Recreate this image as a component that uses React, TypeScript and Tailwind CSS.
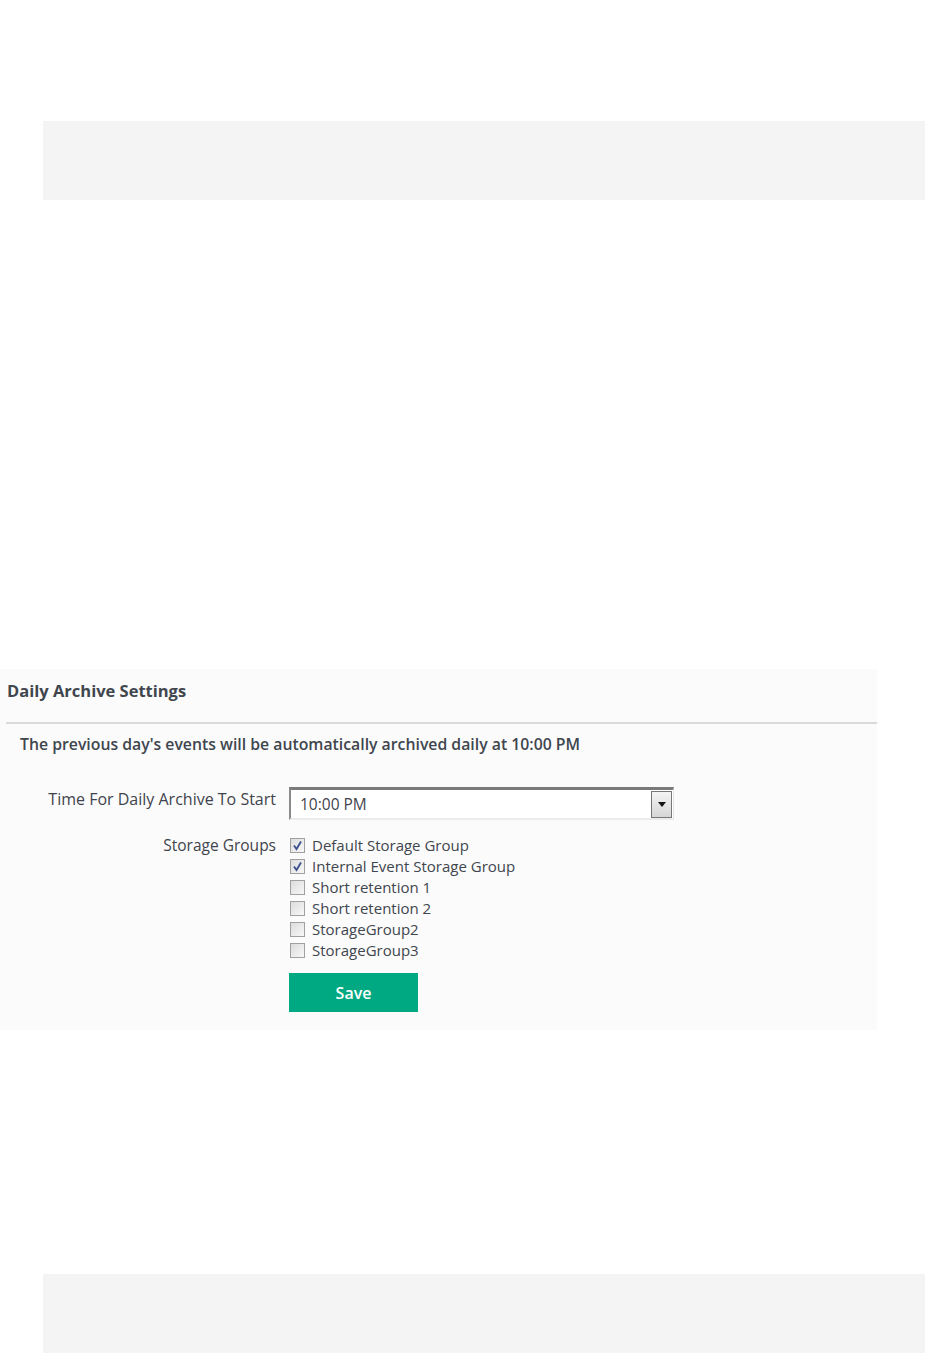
const groups = [
  { name: "Default Storage Group", checked: true },
  { name: "Internal Event Storage Group", checked: true },
  { name: "Short retention 1", checked: false },
  { name: "Short retention 2", checked: false },
  { name: "StorageGroup2", checked: false },
  { name: "StorageGroup3", checked: false },
];

function Box({ checked }: { checked: boolean }) {
  return (
    <span className="flex h-[15px] w-[15px] shrink-0 items-center justify-center border border-[#a0a0a0] bg-gradient-to-br from-[#dcdcdc] to-[#f8f8f8]">
      {checked && (
        <svg width="11" height="11" viewBox="0 0 11 11">
          <path d="M2 5.5 L4.5 9 L9 1.5" fill="none" stroke="#3c4f8c" strokeWidth="1.8" />
        </svg>
      )}
    </span>
  );
}

export default function App() {
  return (
    <div className="min-h-[1353px] bg-white font-['Open_Sans',sans-serif] text-[#3f444c]">
      <div className="pt-[121px] pl-[43px]">
        <div className="h-[79px] bg-[#f4f4f4]" />
      </div>

      <div className="mt-[469px] w-[877px] bg-[#fbfbfb] pb-[18px]">
        <div className="flex h-[53px] items-center pl-[7px] pb-[9px]">
          <h2 className="text-[16.5px] font-bold text-[#40464e]">Daily Archive Settings</h2>
        </div>
        <div className="ml-[6px] h-[2px] bg-[#d9d9d9]" />

        <p className="mt-[9px] pl-[20px] text-[15.8px] font-semibold leading-[22px] text-[#40464e]">
          The previous day's events will be automatically archived daily at 10:00 PM
        </p>

        <div className="mt-[32px] flex items-start">
          <div className="w-[276px] pt-[1px] text-right text-[16px] leading-[22px]">Time For Daily Archive To Start</div>
          <div className="ml-[13px] flex h-[33px] w-[385px] items-center border-t-[3px] border-l-[2px] border-b-[2px] border-r-[1px] border-t-[#7a7a7a] border-l-[#8a8a8a] border-b-[#ececec] border-r-[#e6e6e6] bg-white">
            <span className="flex-1 pl-[9px] pt-[1px] text-[15.5px] text-[#3f444c]">10:00 PM</span>
            <span className="mr-[1px] flex h-[27px] w-[21px] items-center justify-center border border-[#777] bg-gradient-to-b from-[#f4f4f4] to-[#d6d6d6]">
              <svg width="8" height="5" viewBox="0 0 8 5">
                <path d="M0 0 H8 L4 5 Z" fill="#111" />
              </svg>
            </span>
          </div>
        </div>

        <div className="mt-[15px] flex items-start">
          <div className="w-[276px] text-right text-[15.5px] leading-[21px]">Storage Groups</div>
          <div className="ml-[14px] flex flex-col">
            {groups.map((g) => (
              <label key={g.name} className="flex h-[21px] items-center gap-[7px] text-[15px] text-[#40464e]">
                <Box checked={g.checked} />
                <span>{g.name}</span>
              </label>
            ))}
            <button className="mt-[12px] -ml-[1px] h-[39px] w-[129px] bg-[#01a982] text-[16px] font-semibold text-white">
              Save
            </button>
          </div>
        </div>
      </div>

      <div className="mt-[244px] pl-[43px]">
        <div className="h-[79px] bg-[#f4f4f4]" />
      </div>
    </div>
  );
}
